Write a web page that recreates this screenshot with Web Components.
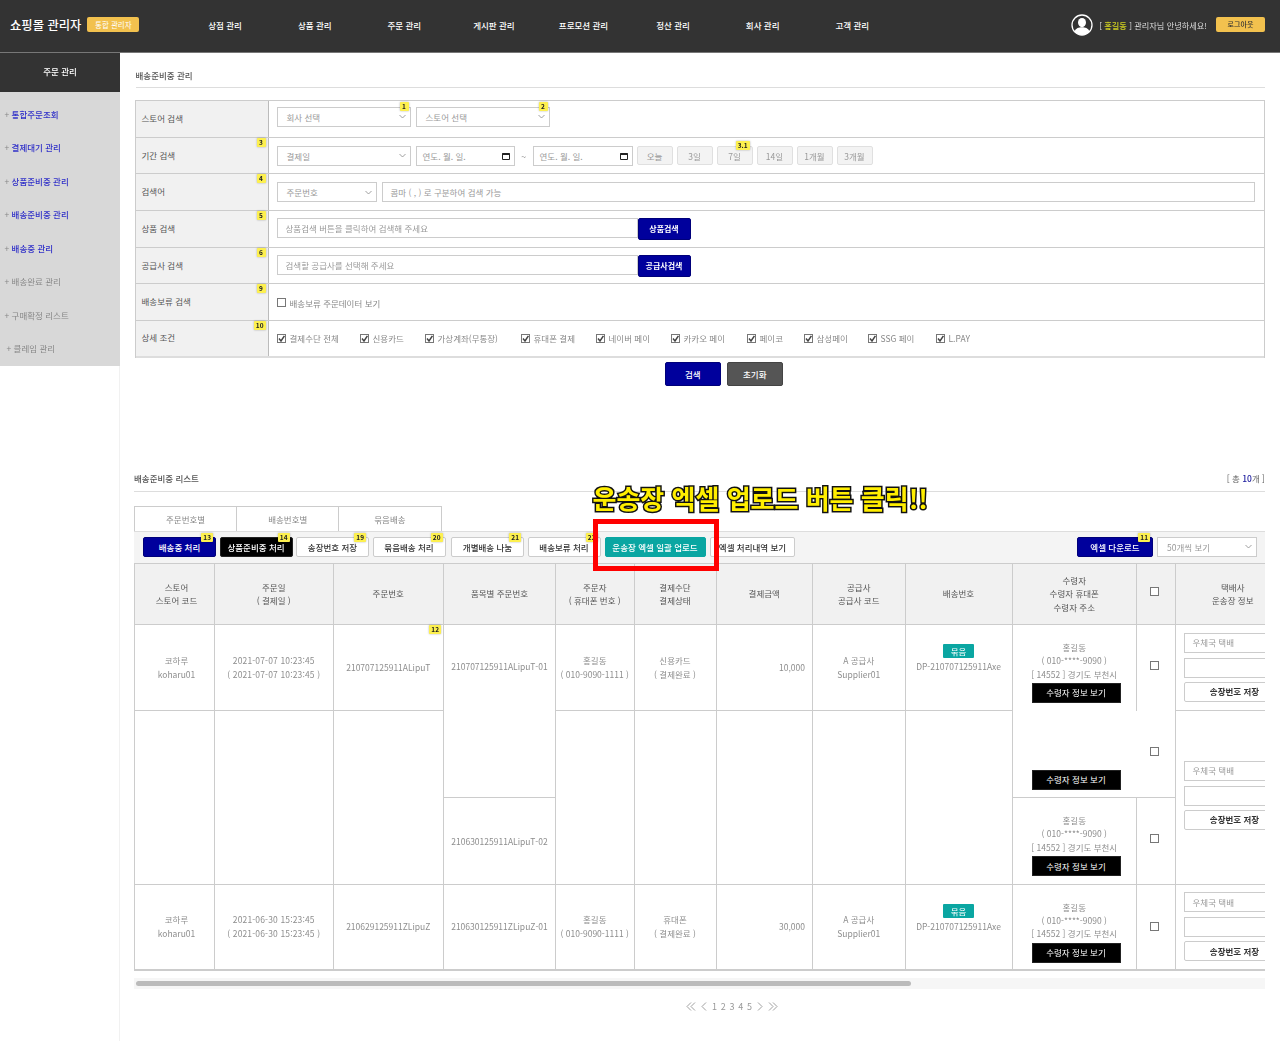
<!DOCTYPE html>
<html lang="ko">
<head>
<meta charset="utf-8">
<title>배송준비중 관리</title>
<style>
	html, body { margin: 0; background: #fff; }
	body { font-family: "Noto Sans CJK KR", "Noto Sans", sans-serif; font-size: 8.5px; color: #777; }
</style>
</head>
<body>
<shop-app></shop-app>
<script>
/* global customElements */

function mount(host, css, html) {
	host.attachShadow({ mode: "open" }).innerHTML = `<style>${css}</style>${html}`;
}

class NumTag extends HTMLElement {
	constructor() {
		super();
		mount(this, `
			:host {
				position: absolute;
				z-index: 2;
				min-width: 9px;
				height: 9px;
				padding: 0 2px;
				box-sizing: border-box;
				background: #fdf04f;
				border-radius: 1px;
				box-shadow: 0 0 2px rgba(0, 0, 0, .35);
				color: #222;
				font-size: 6.5px;
				font-weight: 700;
				line-height: 9px;
				text-align: center;
			}
		`, "<slot></slot>");
	}
}

class UiBtn extends HTMLElement {
	constructor() {
		super();
		mount(this, `
			:host {
				position: relative;
				display: flex;
				flex: none;
				align-items: center;
				justify-content: center;
				box-sizing: border-box;
				height: 20px;
				border: 1px solid #ccc;
				border-radius: 2px;
				background: #fff;
				color: #333;
				font-size: 8.5px;
				font-weight: 500;
				white-space: nowrap;
			}
			:host([variant="navy"]) { background: #00009c; border-color: #00007a; color: #fff; }
			:host([variant="black"]) { background: #000; border-color: #222; border-radius: 0; color: #fff; }
			:host([variant="teal"]) { background: #0aa6a2; border-color: #0aa6a2; color: #fff; }
			:host([variant="gray"]) { background: #555; border-color: #444; color: #fff; }
			:host([variant="light"]) { background: #f3f3f3; border-color: #e0e0e0; color: #999; font-weight: 400; }
		`, "<slot></slot>");
	}
}

class UiField extends HTMLElement {
	constructor() {
		super();
		const type = this.getAttribute("type");
		let icon = "";
		if (type === "select") {
			icon = `<svg width="7" height="5" viewBox="0 0 7 5"><path d="M.5 1 3.5 4 6.5 1" fill="none" stroke="#888" stroke-width=".8"/></svg>`;
		} else if (type === "date") {
			icon = `<svg width="8" height="8" viewBox="0 0 8 8"><path d="M.5 1.5h7v6h-7z" fill="#fff" stroke="#222"/><path d="M.5 1h7v2h-7z" fill="#222"/></svg>`;
		}
		mount(this, `
			:host {
				position: relative;
				display: flex;
				flex: none;
				align-items: center;
				justify-content: space-between;
				box-sizing: border-box;
				height: 20px;
				padding: 0 4px 0 9px;
				border: 1px solid #ccc;
				background: #fff;
				color: #999;
				font-size: 8.5px;
				white-space: nowrap;
			}
		`, `<span><slot></slot></span>${icon}`);
	}
}

class CheckItem extends HTMLElement {
	constructor() {
		super();
		const mark = this.hasAttribute("checked")
			? `<path d="M2 4.6 4 7 7.4 1.8" fill="none" stroke="#444" stroke-width="1.5"/>`
			: "";
		mount(this, `
			:host {
				display: inline-flex;
				flex: none;
				align-items: center;
				gap: 4px;
				color: #888;
				font-size: 8.5px;
				white-space: nowrap;
			}
			svg { display: block; }
		`, `<svg width="9" height="9" viewBox="0 0 9 9"><rect x=".5" y=".5" width="8" height="8" fill="#fff" stroke="#777"/>${mark}</svg><slot></slot>`);
	}
}

class PageTitle extends HTMLElement {
	constructor() {
		super();
		mount(this, `
			:host {
				display: flex;
				align-items: center;
				justify-content: space-between;
				box-sizing: border-box;
				border-bottom: 1px solid #ddd;
				color: #555;
				font-size: 8.5px;
				font-weight: 500;
			}
			.right { color: #666; font-weight: 400; }
		`, `<slot></slot><span class="right"><slot name="right"></slot></span>`);
	}
}

class ShopHeader extends HTMLElement {
	constructor() {
		super();
		const menus = ["상점 관리", "상품 관리", "주문 관리", "게시판 관리", "프로모션 관리", "정산 관리", "회사 관리", "고객 관리"];
		mount(this, `
			:host {
				display: flex;
				align-items: center;
				height: 53px;
				padding: 0 15px 3px 10px;
				box-sizing: border-box;
				background: #333;
				border-bottom: 1px solid #777;
				color: #fff;
			}
			.logo { font-size: 12.3px; font-weight: 500; white-space: nowrap; }
			.scope {
				margin-left: 6px;
				width: 52px;
				height: 15px;
				border-radius: 2px;
				background: #f2c14e;
				font-size: 7.5px;
				line-height: 15px;
				text-align: center;
			}
			nav { display: flex; margin-left: 41px; }
			nav span { width: 89.6px; font-size: 8.5px; font-weight: 500; text-align: center; }
			.user { display: flex; align-items: center; margin-left: auto; font-size: 8.2px; color: #ddd; white-space: nowrap; }
			.user svg { margin-right: 6px; }
			.user b { color: #d0d020; font-weight: 500; }
			.logout {
				margin-left: 9px;
				width: 49px;
				height: 15px;
				border-radius: 2px;
				background: #f2c14e;
				color: #333;
				font-size: 7px;
				font-weight: 500;
				line-height: 15px;
				text-align: center;
			}
		`, `
			<div class="logo">쇼핑몰 관리자</div>
			<div class="scope">통합 관리자</div>
			<nav>${menus.map((m) => `<span>${m}</span>`).join("")}</nav>
			<div class="user">
				<svg width="22" height="22" viewBox="0 0 22 22">
					<circle cx="11" cy="11" r="10" fill="#333" stroke="#fff" stroke-width="1.3"/>
					<ellipse cx="11" cy="8.6" rx="4" ry="4.6" fill="#fff"/>
					<path d="M3.6 17.5c1.2-3.4 4.2-4.2 7.4-4.2s6.2.8 7.4 4.2A10 10 0 0 1 11 21 10 10 0 0 1 3.6 17.5z" fill="#fff"/>
				</svg>
				<span>[ <b>홍길동</b> ] 관리자님 안녕하세요!</span>
				<div class="logout">로그아웃</div>
			</div>
		`);
	}
}

class SideMenu extends HTMLElement {
	constructor() {
		super();
		const items = [
			["통합주문조회", true], ["결제대기 관리", true], ["상품준비중 관리", true], ["배송준비중 관리", true],
			["배송중 관리", true], ["배송완료 관리", false], ["구매확정 리스트", false], ["클레임 관리", false]
		];
		mount(this, `
			:host { display: block; border-right: 1px solid #f1f1f1; }
			h2 {
				margin: 0 -1px 0 0;
				height: 38.5px;
				background: #333;
				color: #fff;
				font-size: 8.5px;
				font-weight: 500;
				line-height: 37px;
				text-align: center;
			}
			ul {
				margin: 0 -1px 0 0;
				padding: 6.5px 0 0 4.5px;
				height: 274.5px;
				box-sizing: border-box;
				list-style: none;
				background: #d8d8d8;
			}
			li { height: 33.43px; line-height: 33.43px; color: #888; font-size: 8.5px; white-space: nowrap; }
			li.on span { color: #3030c8; font-weight: 500; }
			li:last-child { padding-left: 2px; }
		`, `
			<h2>주문 관리</h2>
			<ul>${items.map(([t, on]) => `<li class="${on ? "on" : ""}">+ <span>${t}</span></li>`).join("")}</ul>
		`);
	}
}

class SearchRow extends HTMLElement {
	constructor() {
		super();
		const tag = this.getAttribute("tag");
		mount(this, `
			:host {
				display: flex;
				height: 36.7px;
				box-sizing: border-box;
				border-bottom: 1px solid #ccc;
			}
			.label {
				position: relative;
				flex: none;
				display: flex;
				align-items: center;
				box-sizing: border-box;
				width: 133px;
				padding: 0 0 2px 6px;
				background: #f1f1f1;
				border-right: 1px solid #bbb;
				color: #555;
				font-size: 8.5px;
			}
			.body { display: flex; flex: 1; align-items: center; gap: 5px; padding: 0 9px 0 8px; min-width: 0; }
		`, `
			<div class="label">${this.getAttribute("label")}${tag ? `<num-tag style="top:0;right:2px">${tag}</num-tag>` : ""}</div>
			<div class="body"><slot></slot></div>
		`);
	}
}

class SearchForm extends HTMLElement {
	constructor() {
		super();
		mount(this, `
			:host { display: block; }
			.box { border: 1px solid #ccc; border-bottom: 0; }
			.actions { display: flex; justify-content: center; gap: 6px; margin-top: 4px; padding-left: 48px; }
			.actions ui-btn { width: 56px; height: 24px; }
			.pair { display: flex; flex: 1; }
			.pair ui-field { flex: 1; }
			.pair ui-btn { width: 53px; height: 22px; font-weight: 700; font-size: 8px; }
			.per { display: flex; gap: 4px; margin-left: -1px; }
			.per ui-btn { width: 36px; height: 19px; }
			.wave { color: #555; width: 12px; text-align: center; margin: 0 -2px; }
			.checks { display: flex; }
			.first { margin-top: -4px; }
		`, `
			<div class="box">
				<search-row label="스토어 검색">
					<ui-field class="first" type="select" style="width:134px">회사 선택<num-tag style="top:-6px;right:1px">1</num-tag></ui-field>
					<ui-field class="first" type="select" style="width:134px">스토어 선택<num-tag style="top:-6px;right:1px">2</num-tag></ui-field>
				</search-row>
				<search-row label="기간 검색" tag="3">
					<ui-field type="select" style="width:134px">결제일</ui-field>
					<ui-field type="date" style="width:99px;padding-left:6px">연도. 월. 일.</ui-field>
					<span class="wave">~</span>
					<ui-field type="date" style="width:100px;padding-left:6px">연도. 월. 일.</ui-field>
					<div class="per">
						<ui-btn variant="light">오늘</ui-btn>
						<ui-btn variant="light">3일</ui-btn>
						<ui-btn variant="light">7일<num-tag style="top:-6px;right:2px;padding:0 2px">3.1</num-tag></ui-btn>
						<ui-btn variant="light">14일</ui-btn>
						<ui-btn variant="light">1개월</ui-btn>
						<ui-btn variant="light">3개월</ui-btn>
					</div>
				</search-row>
				<search-row label="검색어" tag="4">
					<ui-field type="select" style="width:100px">주문번호</ui-field>
					<ui-field style="flex:1;padding-left:8px">콤마 ( , ) 로 구분하여 검색 가능</ui-field>
				</search-row>
				<search-row label="상품 검색" tag="5">
					<div class="pair" style="flex:none;width:414px">
						<ui-field style="padding-left:8px">상품검색 버튼을 클릭하여 검색해 주세요</ui-field>
						<ui-btn variant="navy">상품검색</ui-btn>
					</div>
				</search-row>
				<search-row label="공급사 검색" tag="6">
					<div class="pair" style="flex:none;width:414px">
						<ui-field style="padding-left:8px">검색할 공급사를 선택해 주세요</ui-field>
						<ui-btn variant="navy">공급사검색</ui-btn>
					</div>
				</search-row>
				<search-row label="배송보류 검색" tag="9">
					<check-item style="margin-top:1px">배송보류 주문데이터 보기</check-item>
				</search-row>
				<search-row label="상세 조건" tag="10" style="border-bottom:2px solid #ddd">
					<div class="checks">
						<check-item checked style="width:83px">결제수단 전체</check-item>
						<check-item checked style="width:65px">신용카드</check-item>
						<check-item checked style="width:96px">가상계좌(무통장)</check-item>
						<check-item checked style="width:75px">휴대폰 결제</check-item>
						<check-item checked style="width:75px">네이버 페이</check-item>
						<check-item checked style="width:76px">카카오 페이</check-item>
						<check-item checked style="width:57px">페이코</check-item>
						<check-item checked style="width:64px">삼성페이</check-item>
						<check-item checked style="width:68px">SSG 페이</check-item>
						<check-item checked>L.PAY</check-item>
					</div>
				</search-row>
			</div>
			<div class="actions">
				<ui-btn variant="navy">검색</ui-btn>
				<ui-btn variant="gray">초기화</ui-btn>
			</div>
		`);
	}
}

class ListToolbar extends HTMLElement {
	constructor() {
		super();
		mount(this, `
			:host {
				display: flex;
				align-items: center;
				height: 33.5px;
				box-sizing: border-box;
				padding: 0 8px 2px 9px;
				background: #f4f4f4;
				border-top: 1px solid #ddd;
				border-bottom: 1px solid #ccc;
			}
			.group { display: flex; gap: 3.5px; }
			.group ui-btn { width: 73px; }
			.end { display: flex; gap: 4px; margin-left: auto; }
			.tag { top: -5px; right: 2px; }
		`, `
			<div class="group">
				<ui-btn variant="navy">배송중 처리<num-tag class="tag">13</num-tag></ui-btn>
				<ui-btn variant="black" style="border-radius:2px">상품준비중 처리<num-tag class="tag">14</num-tag></ui-btn>
				<ui-btn>송장번호 저장<num-tag class="tag">19</num-tag></ui-btn>
				<ui-btn style="margin-right:2px">묶음배송 처리<num-tag class="tag">20</num-tag></ui-btn>
				<ui-btn>개별배송 나눔<num-tag class="tag">21</num-tag></ui-btn>
				<ui-btn style="margin-right:.5px">배송보류 처리<num-tag class="tag">22</num-tag></ui-btn>
				<ui-btn variant="teal" style="width:101px">운송장 엑셀 일괄 업로드</ui-btn>
				<ui-btn style="width:85px;margin-left:1px">엑셀 처리내역 보기</ui-btn>
			</div>
			<div class="end">
				<ui-btn variant="navy" style="width:76px">엑셀 다운로드<num-tag class="tag">11</num-tag></ui-btn>
				<ui-field type="select" style="width:100px">50개씩 보기</ui-field>
			</div>
		`);
	}
}

class OrderTable extends HTMLElement {
	constructor() {
		super();
		const two = (a, b) => `${a}<br>${b}`;
		const receiver = `홍길동<br>( 010-****-9090 )<br>[ 14552 ] 경기도 부천시<ui-btn variant="black" class="view">수령자 정보 보기</ui-btn>`;
		const box = `<svg class="box" width="9" height="9" viewBox="0 0 9 9"><rect x=".5" y=".5" width="8" height="8" fill="#fff" stroke="#777"/></svg>`;
		const carrier = `<ui-field style="width:102px;padding-left:8px">우체국 택배</ui-field><ui-field style="width:102px"></ui-field><ui-btn style="width:102px;font-weight:700;padding-left:0">송장번호 저장</ui-btn>`;
		const bundle = `<span class="bundle">묶음</span><br>DP-210707125911Axe`;
		const store = two("코하루", "koharu01");
		const supplier = two("A 공급사", "Supplier01");
		const buyer = two("홍길동", "( 010-9090-1111 )");
		mount(this, `
			:host { display: block; overflow: hidden; border-left: 1px solid #ccc; }
			table { border-collapse: separate; border-spacing: 0; table-layout: fixed; width: 1156px; }
			th, td {
				box-sizing: border-box;
				padding: 0;
				border-right: 1px solid #ccc;
				border-bottom: 1px solid #ccc;
				text-align: center;
				vertical-align: middle;
				font-size: 8.5px;
				line-height: 13.4px;
				color: #8e8e8e;
			}
			th { height: 60.5px; background: #f1f1f1; color: #555; font-weight: 400; }
			tr.r td { height: 86.6px; position: relative; }
			th:first-child, td.store { padding-left: 4px; }
			.amount { text-align: right; padding-right: 7px; }
			.date { letter-spacing: .15px; }
			.top { vertical-align: top; padding-top: 35px; }
			tr.r td.low { vertical-align: top; padding-top: 37px; }
			tr.r td.dp { vertical-align: top; padding-top: 19px; }
			tr.r td.recv { vertical-align: top; padding-top: 16px; text-align: center; }
			.view { width: 89px; height: 20px; margin: 2px 0 0 19px; font-size: 8.5px; font-weight: 400; }
			.carrier { display: flex; flex-direction: column; gap: 4.5px; padding-left: 8px; }
			.carrier.mid { margin-top: -4px; }
			.bundle {
				display: inline-block;
				width: 31px;
				height: 14px;
				margin-bottom: 2px;
				border-radius: 1px;
				background: #0aa6a2;
				color: #fff;
				line-height: 14px;
			}
			.box { display: block; margin: 0 auto; position: relative; left: -1px; }
			.up .box { margin-top: -5px; }
			.nb { border-bottom: 0; }
			.nr { border-right: 0; }
			.late { vertical-align: bottom; padding-bottom: 7px; }
			.end th, .end td { border-bottom-width: 2px; border-bottom-color: #ccc; }
			num-tag { top: 0; right: 2px; }
		`, `
			<table>
				<colgroup>
					<col style="width:80px"><col style="width:118.5px"><col style="width:110.5px"><col style="width:112px">
					<col style="width:78.5px"><col style="width:82px"><col style="width:96.5px"><col style="width:92.5px">
					<col style="width:107px"><col style="width:124.5px"><col style="width:38.5px"><col style="width:115.5px">
				</colgroup>
				<tr>
					<th>${two("스토어", "스토어 코드")}</th>
					<th>${two("주문일", "( 결제일 )")}</th>
					<th>주문번호</th>
					<th>품목별 주문번호</th>
					<th>${two("주문자", "( 휴대폰 번호 )")}</th>
					<th>${two("결제수단", "결제상태")}</th>
					<th>결제금액</th>
					<th>${two("공급사", "공급사 코드")}</th>
					<th>배송번호</th>
					<th>수령자<br>수령자 휴대폰<br>수령자 주소</th>
					<th class="up">${box}</th>
					<th>${two("택배사", "운송장 정보")}</th>
				</tr>
				<tr class="r">
					<td class="store">${store}</td>
					<td class="date">${two("2021-07-07 10:23:45", "( 2021-07-07 10:23:45 )")}</td>
					<td style="position:relative">210707125911ALipuT<num-tag>12</num-tag></td>
					<td rowspan="2" class="top">210707125911ALipuT-01</td>
					<td>${buyer}</td>
					<td>${two("신용카드", "( 결제완료 )")}</td>
					<td class="amount">10,000</td>
					<td>${supplier}</td>
					<td class="dp">${bundle}</td>
					<td class="nb recv">${receiver}</td>
					<td class="nb up">${box}</td>
					<td><div class="carrier">${carrier}</div></td>
				</tr>
				<tr class="r">
					<td rowspan="2"></td><td rowspan="2"></td><td rowspan="2"></td>
					<td rowspan="2"></td><td rowspan="2"></td><td rowspan="2"></td><td rowspan="2"></td><td rowspan="2"></td>
					<td class="nr late"><ui-btn variant="black" class="view">수령자 정보 보기</ui-btn></td>
					<td class="up">${box}</td>
					<td rowspan="2"><div class="carrier mid">${carrier}</div></td>
				</tr>
				<tr class="r">
					<td class="low">210630125911ALipuT-02</td>
					<td class="recv">${receiver}</td>
					<td class="up">${box}</td>
				</tr>
				<tr class="r end">
					<td class="store">${store}</td>
					<td class="date">${two("2021-06-30 15:23:45", "( 2021-06-30 15:23:45 )")}</td>
					<td>210629125911ZLipuZ</td>
					<td>210630125911ZLipuZ-01</td>
					<td>${buyer}</td>
					<td>${two("휴대폰", "( 결제완료 )")}</td>
					<td class="amount">30,000</td>
					<td>${supplier}</td>
					<td class="dp">${bundle}</td>
					<td class="recv">${receiver}</td>
					<td>${box}</td>
					<td><div class="carrier">${carrier}</div></td>
				</tr>
			</table>
		`);
	}
}

class PagerBar extends HTMLElement {
	constructor() {
		super();
		const single = (d) => `<svg width="6" height="9" viewBox="0 0 6 9"><path d="${d}" fill="none" stroke="#888" stroke-width=".8"/></svg>`;
		const double = (d, e) => `<svg width="10" height="9" viewBox="0 0 10 9"><path d="${d}" fill="none" stroke="#888" stroke-width=".8"/><path d="${e}" fill="none" stroke="#888" stroke-width=".8"/></svg>`;
		mount(this, `
			:host {
				display: flex;
				align-items: center;
				justify-content: center;
				gap: 5px;
				height: 12px;
				padding-left: 65px;
				color: #999;
				font-size: 9px;
			}
			.nums { display: flex; gap: 3.75px; }
		`, `
			${double("M5 .5 1 4.5 5 8.5", "M9 .5 5 4.5 9 8.5")}
			${single("M5 .5 1 4.5 5 8.5")}
			<div class="nums"><span>1</span><span>2</span><span>3</span><span>4</span><span>5</span></div>
			${single("M1 .5 5 4.5 1 8.5")}
			${double("M1 .5 5 4.5 1 8.5", "M5 .5 9 4.5 5 8.5")}
		`);
	}
}

class OrderList extends HTMLElement {
	constructor() {
		super();
		mount(this, `
			:host { display: block; position: relative; }
			page-title { height: 20px; padding-bottom: 6px; }
			.count b { color: #2020a0; font-weight: 500; }
			.tabs { display: flex; width: 307.5px; margin-top: 14px; border: 1px solid #ccc; border-bottom: 0; box-sizing: border-box; height: 25px; }
			.tabs span { flex: 1; text-align: center; line-height: 24px; color: #888; font-size: 8.5px; border-right: 1px solid #ccc; }
			.tabs span:last-child { border-right: 0; }
			.scroll { height: 11px; margin-top: 7px; padding: 3px 2px; box-sizing: border-box; background: #f6f6f6; }
			.scroll i { display: block; width: 775px; height: 5px; border-radius: 3px; background: #bbb; }
			pager-bar { margin-top: 11px; }
			.callout {
				position: absolute;
				left: 458.5px;
				top: 6px;
				color: #ffee00;
				font-size: 26px;
				font-weight: 700;
				line-height: 40px;
				white-space: nowrap;
				-webkit-text-stroke: 3px #111;
				paint-order: stroke fill;
				z-index: 4;
			}
			.frame {
				position: absolute;
				left: 459px;
				top: 47px;
				width: 125.5px;
				height: 52px;
				box-sizing: border-box;
				border: 5px solid #f00;
				z-index: 3;
			}
		`, `
			<page-title>배송준비중 리스트<span class="count" slot="right">[ 총 <b>10</b>개 ]</span></page-title>
			<div class="tabs"><span>주문번호별</span><span>배송번호별</span><span>묶음배송</span></div>
			<list-toolbar></list-toolbar>
			<order-table></order-table>
			<div class="scroll"><i></i></div>
			<pager-bar></pager-bar>
			<div class="callout">운송장 엑셀 업로드 버튼 클릭!!</div>
			<div class="frame"></div>
		`);
	}
}

class ShopApp extends HTMLElement {
	constructor() {
		super();
		mount(this, `
			:host { display: block; height: 1041px; overflow: hidden; filter: blur(.3px); }
			.layout { display: grid; grid-template-columns: 120px 1fr; height: 988px; }
			main { padding: 0 15px 0 14.5px; min-width: 0; }
			page-title { height: 35px; padding-top: 9px; margin-left: 1px; }
			search-form { margin-top: 12px; }
			order-list { margin: 86px 0 0 -.5px; }
		`, `
			<shop-header></shop-header>
			<div class="layout">
				<side-menu></side-menu>
				<main>
					<page-title>배송준비중 관리</page-title>
					<search-form></search-form>
					<order-list></order-list>
				</main>
			</div>
		`);
	}
}

customElements.define("num-tag", NumTag);
customElements.define("ui-btn", UiBtn);
customElements.define("ui-field", UiField);
customElements.define("check-item", CheckItem);
customElements.define("page-title", PageTitle);
customElements.define("shop-header", ShopHeader);
customElements.define("side-menu", SideMenu);
customElements.define("search-row", SearchRow);
customElements.define("search-form", SearchForm);
customElements.define("list-toolbar", ListToolbar);
customElements.define("order-table", OrderTable);
customElements.define("pager-bar", PagerBar);
customElements.define("order-list", OrderList);
customElements.define("shop-app", ShopApp);
</script>
</body>
</html>
